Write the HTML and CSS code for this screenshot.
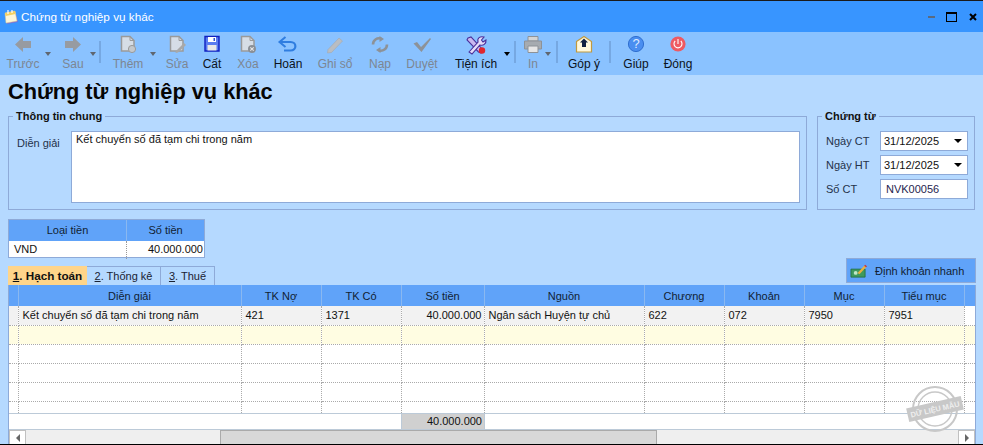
FILE: index.html
```html
<!DOCTYPE html>
<html lang="vi">
<head>
<meta charset="utf-8">
<title>Chứng từ nghiệp vụ khác</title>
<link rel="stylesheet" href="styles.css">
</head>
<body>
<div class="window">
  <header class="titlebar">
    <svg class="app-icon" viewBox="0 0 16 16"><path d="M2 5 L12 2 L15 13 L4 15 Z" fill="#7d6fd8"/><path d="M2 4 L12 2 L14 12 L3 14 Z" fill="#fdf6d8" stroke="#d8c890" stroke-width=".5"/><path d="M2 4 L12 2 L12.6 5 L2.6 7 Z" fill="#f4d060"/><path d="M5 1v4M9 1v3" stroke="#fff" stroke-width="1.2"/></svg>
    <span class="title-text">Chứng từ nghiệp vụ khác</span>
    <div class="win-controls">
      <span class="win-min"></span>
      <span class="win-max"></span>
      <svg class="win-close" viewBox="0 0 8 8"><path d="M1 1 L7 7 M7 1 L1 7" stroke="#000" stroke-width="2"/></svg>
    </div>
  </header>

  <nav class="toolbar">
    <div class="tb w40 off"><svg class="ic" viewBox="0 0 24 20"><path d="M4 9.5 L12 2 V6 H20 V13 H12 V17 Z" fill="#979ba1"/></svg><span>Trước</span></div>
    <div class="drop w10 off"></div>
    <div class="tb w30 ml5 off"><svg class="ic" viewBox="0 0 24 20"><path d="M20 9.5 L12 2 V6 H4 V13 H12 V17 Z" fill="#979ba1"/></svg><span>Sau</span></div>
    <div class="drop w10 off"></div>
    <i class="sep s98"></i>
    <div class="tb w40 off"><svg class="ic" viewBox="0 0 24 20"><path d="M5.5 1.5 H14 L18 5.5 V16 H5.5 Z" fill="#d6dde6" stroke="#9a9a9a" stroke-width="1.5"/><path d="M14 1.5 V5.5 H18" fill="none" stroke="#9a9a9a"/><circle cx="16" cy="14" r="3.6" fill="#c4c8cc" stroke="#9a9a9a"/></svg><span>Thêm</span></div>
    <div class="drop w10 off"></div>
    <div class="tb w32 ml3 off"><svg class="ic" viewBox="0 0 24 20"><path d="M5.5 1.5 H14 L18 5.5 V16 H5.5 Z" fill="#d6dde6" stroke="#9a9a9a" stroke-width="1.5"/><path d="M14 1.5 V5.5 H18" fill="none" stroke="#9a9a9a"/><path d="M11 16 L19 8 L21 10 L13 17.5 L10.5 18 Z" fill="#a8a8a8"/></svg><span>Sửa</span></div>
    <div class="tb w38 on"><svg class="ic" viewBox="0 0 24 20"><path d="M5 1.5 H19 V16 H5 Z" fill="#5a7cf0" stroke="#1020c0" stroke-width="1.4"/><path d="M8 2 H16 V7 H8 Z" fill="#fff"/><path d="M13.5 3 H15 V6 H13.5 Z" fill="#3050d0"/><path d="M7.5 10 H16.5 V15.5 H7.5 Z" fill="#e8e8e8"/></svg><span>Cất</span></div>
    <div class="tb w34 off"><svg class="ic" viewBox="0 0 24 20"><path d="M5.5 1.5 H14 L18 5.5 V16 H5.5 Z" fill="#d6dde6" stroke="#9a9a9a" stroke-width="1.5"/><path d="M14 1.5 V5.5 H18" fill="none" stroke="#9a9a9a"/><circle cx="16" cy="14" r="4" fill="#8a8f96"/><path d="M14.3 12.3 L17.7 15.7 M17.7 12.3 L14.3 15.7" stroke="#e6e6e6" stroke-width="1.1"/></svg><span>Xóa</span></div>
    <div class="tb w46 on"><svg class="ic" viewBox="0 0 24 20"><path d="M5 7 H14.5 C21 7 21 15.5 14.5 15.5 H8" fill="none" stroke="#2f7de0" stroke-width="2.2"/><path d="M9.5 2 L3.5 7 L9.5 12" fill="none" stroke="#2f7de0" stroke-width="2"/></svg><span>Hoãn</span></div>
    <div class="tb w48 off"><svg class="ic" viewBox="0 0 24 20"><path d="M5 14.5 L16 3 L19.5 6 L8.5 17.5 L4.5 18 Z" fill="#b9bdc2" stroke="#a5a8ac" stroke-width=".6"/></svg><span>Ghi sổ</span></div>
    <div class="tb w42 off"><svg class="ic" viewBox="0 0 24 20"><path d="M5 9.5 C5 5 9 2.5 13 3.5 M19 9.5 C19 14 15 16.5 11 15.5" fill="none" stroke="#8d9298" stroke-width="2.6"/><path d="M11.5 1 L16 4 L11.5 7 Z M12.5 12 L8 15 L12.5 18 Z" fill="#8d9298"/></svg><span>Nạp</span></div>
    <div class="tb w42 off"><svg class="ic" viewBox="0 0 24 20"><path d="M3.5 8.5 L7 7 L11 12 L20 3 L21 4 L11.5 17 Z" fill="#8d9298"/></svg><span>Duyệt</span></div>
    <div class="tb w52 ml7 on"><svg class="ic" viewBox="0 0 24 20"><path d="M4 3 L7 2 L19 15 L17 18 L14.5 17 L3 5 Z" fill="#c9b8f0" stroke="#4a2f9a" stroke-width="1.1"/><path d="M5 17 L14 7 C13 3 16 1 20 2 L17.5 5 L19 7 L22 5 C22.5 9 19 11 16 10 L8 19 Z" fill="#e4dcfa" stroke="#4a2f9a" stroke-width="1.1"/><circle cx="18" cy="15.5" r="3.2" fill="#e0262e"/></svg><span>Tiện ích</span></div>
    <div class="drop w10 on"></div>
    <i class="sep"></i>
    <div class="tb w24 ml3 off"><svg class="ic" viewBox="0 0 24 20"><path d="M7 1.5 H17 V6 H7 Z" fill="#d4d4d4" stroke="#8d9298"/><path d="M3.5 6 H20.5 V14 H3.5 Z" fill="#a6abb0" stroke="#8d9298"/><path d="M7 11 H17 V17.5 H7 Z" fill="#e6e6e6" stroke="#8d9298"/></svg><span>In</span></div>
    <div class="drop w6 off"></div>
    <i class="sep s556"></i>
    <div class="tb w44 on"><svg class="ic" viewBox="0 0 24 20"><path d="M4.5 6.5 L12 1.5 L19.5 6.5 V17 H4.5 Z" fill="#fff8dc" stroke="#c09a40" stroke-width="1.2"/><path d="M12 3.5 L16 7.5 H14 V12 H10 V7.5 H8 Z" fill="#102040"/></svg><span>Góp ý</span></div>
    <i class="sep s610"></i>
    <div class="tb w40 on"><svg class="ic" viewBox="0 0 24 20"><circle cx="12" cy="9" r="7.6" fill="#4a8ef0" stroke="#2f6fd0"/><text x="12" y="13" class="q">?</text></svg><span>Giúp</span></div>
    <div class="tb w42 ml1 on"><svg class="ic" viewBox="0 0 24 20"><circle cx="12" cy="9" r="7.6" fill="#ee5a62"/><path d="M9.2 6 A4 4 0 1 0 14.8 6" fill="none" stroke="#fff" stroke-width="1.1"/><path d="M12 4 V9" stroke="#fff" stroke-width="1.1"/></svg><span>Đóng</span></div>
  </nav>

  <main class="content">
    <h1 class="page-title">Chứng từ nghiệp vụ khác</h1>

    <div class="groups">
      <fieldset class="group info">
        <legend>Thông tin chung</legend>
        <label class="dg-label">Diễn giải</label>
        <div class="memo">Kết chuyển số đã tạm chi trong năm</div>
      </fieldset>
      <fieldset class="group voucher">
        <legend>Chứng từ</legend>
        <div class="field"><label>Ngày CT</label><div class="input">31/12/2025<i class="caret"></i></div></div>
        <div class="field"><label>Ngày HT</label><div class="input">31/12/2025<i class="caret"></i></div></div>
        <div class="field"><label>Số CT</label><div class="input code">NVK00056</div></div>
      </fieldset>
    </div>

    <div class="currency">
      <div class="cur-h cur-a">Loại tiền</div>
      <div class="cur-h">Số tiền</div>
      <div class="cur-c cur-a">VND</div>
      <div class="cur-c num">40.000.000</div>
    </div>

    <div class="tabrow">
      <div class="tabs">
        <div class="tab active"><u>1</u>. Hạch toán</div>
        <div class="tab t2"><u>2</u>. Thống kê</div>
        <div class="tab t3"><u>3</u>. Thuế</div>
      </div>
      <button class="quick">
        <svg class="quick-ic" viewBox="0 0 18 14"><path d="M1 5 H16 V13.5 H1 Z" fill="#3f9a5e" stroke="#1f6a3a" stroke-width=".8"/><circle cx="6" cy="9" r="2" fill="#bfe8c8"/><path d="M8 9 L15 1.5 L17 3 L10 10.5 Z" fill="#e8b040"/><path d="M15 1.5 L16 .5 L18 2 L17 3 Z" fill="#d03030"/></svg>
        Định khoản nhanh
      </button>
    </div>

    <div class="grid">
      <table class="sheet">
        <colgroup><col class="c0"><col class="c1"><col class="c2"><col class="c2"><col class="c3"><col class="c4"><col class="c2"><col class="c2"><col class="c2"><col class="c2"><col></colgroup>
        <thead>
          <tr><th></th><th>Diễn giải</th><th>TK Nợ</th><th>TK Có</th><th>Số tiền</th><th>Nguồn</th><th>Chương</th><th>Khoản</th><th>Mục</th><th>Tiểu mục</th><th></th></tr>
        </thead>
        <tbody>
          <tr class="filled"><td></td><td>Kết chuyển số đã tạm chi trong năm</td><td>421</td><td>1371</td><td class="num">40.000.000</td><td>Ngân sách Huyện tự chủ</td><td>622</td><td>072</td><td>7950</td><td>7951</td><td></td></tr>
          <tr class="newrow"><td></td><td></td><td></td><td></td><td></td><td></td><td></td><td></td><td></td><td></td><td></td></tr>
          <tr><td></td><td></td><td></td><td></td><td></td><td></td><td></td><td></td><td></td><td></td><td></td></tr>
          <tr><td></td><td></td><td></td><td></td><td></td><td></td><td></td><td></td><td></td><td></td><td></td></tr>
          <tr><td></td><td></td><td></td><td></td><td></td><td></td><td></td><td></td><td></td><td></td><td></td></tr>
          <tr class="last"><td></td><td></td><td></td><td></td><td></td><td></td><td></td><td></td><td></td><td></td><td></td></tr>
        </tbody>
      </table>
      <div class="totals"><div class="total-spacer"></div><div class="total-cell">40.000.000</div></div>
      <div class="hscroll">
        <div class="sb-btn"><i class="arr-l"></i></div>
        <div class="sb-track left"></div>
        <div class="sb-thumb"></div>
        <div class="sb-track right"></div>
        <div class="sb-btn"><i class="arr-r"></i></div>
      </div>
    </div>

    <svg class="stamp" viewBox="0 0 60 50">
      <g fill="none" stroke="#c8c8c8">
        <circle cx="30" cy="25" r="22" stroke-width="2"/>
        <circle cx="30" cy="25" r="17" stroke-width="1.4"/>
      </g>
      <g transform="rotate(-13 30 25)">
        <rect x="2" y="18" width="56" height="14" fill="#c8c8c8"/>
        <text x="30" y="28" class="stamp-text">DỮ LIỆU MẪU</text>
      </g>
    </svg>
  </main>
</div>
</body>
</html>
```

FILE: styles.css
```css
* { box-sizing: border-box; }
html, body { margin: 0; height: 100%; overflow: hidden; }
body { font-family: "Liberation Sans", Arial, sans-serif; font-size: 11px; color: #111; }

.window {
  width: 983px; height: 445px;
  display: flex; flex-direction: column;
  border-top: 1px solid #1a1a1a;
  border-bottom: 1px solid #000;
  background: #b5d9ff;
  position: relative;
}

.titlebar {
  height: 31px; flex: none;
  background: #3895ff;
  display: flex; align-items: center;
  padding: 0 0 0 3px;
}
.app-icon { width: 16px; height: 16px; margin-right: 2px; }
.title-text { color: #fff; font-size: 11.75px; }
.win-controls { margin-left: auto; display: flex; align-items: center; padding-right: 6px; }
.win-min { width: 7px; height: 2px; background: #5a6a80; margin-right: 11px; }
.win-max { width: 11px; height: 10px; border: 1px solid #000; border-top-width: 2px; margin-right: 12px; }
.win-close { width: 8px; height: 8px; }

.toolbar {
  height: 43px; flex: none;
  background: #8ac2ff;
  display: flex;
  padding-left: 3px;
  font-size: 12px;
}
.tb { display: flex; flex-direction: column; align-items: center; white-space: nowrap; padding-top: 3px; flex: none; }
.ic { width: 24px; height: 20px; display: block; margin-bottom: 1px; }
.tb span { line-height: 16px; }
.off { color: #7d8692; }
.on { color: #0c1220; }
.q { font: 13px "Liberation Sans", sans-serif; fill: #dfeaff; text-anchor: middle; }

.w6 { width: 6px; } .w10 { width: 10px; } .w24 { width: 24px; } .w30 { width: 30px; } .w32 { width: 32px; }
.w34 { width: 34px; } .w38 { width: 38px; } .w40 { width: 40px; } .w42 { width: 42px; }
.w44 { width: 44px; } .w46 { width: 46px; } .w48 { width: 48px; } .w52 { width: 52px; }
.ml1 { margin-left: 1px; } .ml3 { margin-left: 3px; } .ml5 { margin-left: 5px; } .ml7 { margin-left: 7px; }

.drop { flex: none; position: relative; }
.drop::after {
  content: ""; position: absolute; left: 50%; top: 20px; margin-left: -3px;
  border: 3px solid transparent; border-top: 4px solid currentColor; border-bottom: 0;
}
.drop.off { color: #5f6670; }
.drop.on { color: #000; }

.sep { flex: none; width: 2px; height: 22px; margin: 9px 2px 0; background: #6f9fd8; opacity: .75; }
.s98 { margin: 9px 7px 0 1px; }
.s556 { margin: 9px 4px 0 5px; }
.s610 { margin: 9px 5px 0 3px; }

.content { flex: 1; padding: 0 7px 0 8px; display: flex; flex-direction: column; min-height: 0; }
.page-title { margin: 3px 0 0; font-size: 21.75px; line-height: 28px; font-weight: 700; color: #050505; height: 31px; }

.groups { display: flex; gap: 10px; height: 101px; flex: none; }
.group { margin: 0; border: 1px solid #8eaad8; padding: 0; min-width: 0; position: relative; height: 101px; }
.group legend { font-weight: 700; margin-left: 4px; padding: 0 3px; font-size: 11px; line-height: 14px; color: #111; }
.info { width: 799px; padding: 0; }
.voucher { width: 158px; padding: 8px 6px 0 8px; }
.voucher legend { margin-left: -4px; }
.dg-label { position: absolute; left: 8px; top: 14px; color: #24324a; }
.memo { position: absolute; left: 62px; top: 8px; width: 729px; height: 72px; background: #fff; border: 1px solid #8eaad8; padding: 1px 4px; }
.field { display: flex; align-items: center; height: 20px; margin-bottom: 4px; }
.field label { width: 54px; color: #24324a; }
.input { width: 88px; height: 20px; border: 1px solid #8eaad8; background: #fff; padding-left: 3px; line-height: 18px; position: relative; }
.code { padding-left: 5px; color: #26244e; }
.caret { position: absolute; right: 5px; top: 7px; border: 4px solid transparent; border-top: 4px solid #000; border-bottom: 0; }

.currency {
  margin-top: 9px; flex: none; width: 197px; height: 39px;
  display: grid; grid-template-columns: 118px 77px; grid-template-rows: 21px 18px;
  border: 1px solid #8eaad8; background: #fff;
}
.cur-h { background: #60a3f9; text-align: center; line-height: 20px; color: #111e33; }
.cur-h.cur-a { border-right: 1px solid #8ab8f0; }
.cur-c { padding: 0 1px 0 5px; line-height: 17px; }
.cur-c.cur-a { border-right: 1px dotted #999; }
.num { text-align: right; }

.tabrow { display: flex; justify-content: space-between; height: 27px; flex: none; width: 968px; }
.tabs { display: flex; align-self: flex-end; height: 19px; }
.tab { border: 1px solid #8eaad8; border-bottom: 0; border-left: 0; line-height: 18px; text-align: center; color: #1a2233; }
.tab.active { width: 79px; background: #ffd58a; font-weight: 700; font-size: 11.7px; border: 0; color: #111; line-height: 19px; }
.t2 { width: 74px; } .t3 { width: 54px; }
.quick {
  width: 130px; height: 25px; background: #60a3f9; border: 1px solid #8eaad8;
  font: 11px "Liberation Sans", Arial, sans-serif; color: #111e33;
  display: flex; align-items: center; padding: 0 0 0 3px; white-space: nowrap;
}
.quick-ic { width: 17px; height: 14px; margin-right: 8px; }

.grid { width: 968px; border-left: 1px solid #8eaad8; border-right: 1px solid #8eaad8; background: #fff; flex: 1; display: flex; flex-direction: column; min-height: 0; }
.sheet { border-collapse: collapse; table-layout: fixed; width: 966px; flex: none; }
.c0 { width: 9px; } .c1 { width: 223px; } .c2 { width: 80px; } .c3 { width: 83px; } .c4 { width: 160px; }
.sheet th { background: #60a3f9; height: 21px; font-weight: 400; color: #111e33; border-right: 1px solid #8ab8f0; padding: 0; }
.sheet td { height: 19px; padding: 0 3px 0 4px; border-right: 1px dotted #aaa; border-bottom: 1px dotted #aaa; white-space: nowrap; overflow: hidden; color: #111; }
.sheet td.num { padding-right: 2px; }
.sheet th:last-child, .sheet td:last-child { border-right: 0; }
.filled td { background: #f2f2f2; }
.filled td:last-child { background: #fff; }
.newrow td { background: #fffde2; }
.sheet .last td { height: 12px; border-bottom: 0; }

.totals { display: flex; height: 17px; border-top: 1px solid #bccad8; border-bottom: 1px solid #bccad8; flex: none; }
.total-spacer { width: 392px; }
.total-cell { width: 84px; background: #d0d0d0; border-left: 1px solid #bccad8; border-right: 1px solid #bccad8; text-align: right; padding-right: 2px; line-height: 15px; }

.hscroll { display: flex; flex: 1; min-height: 0; background: #efefef; }
.sb-btn { width: 17px; background: #fff; border: 1px solid #c0c0c0; border-bottom: 0; display: flex; align-items: center; justify-content: center; flex: none; }
.arr-l { border: 4px solid transparent; border-right: 4px solid #666; border-left: 0; }
.arr-r { border: 4px solid transparent; border-left: 4px solid #666; border-right: 0; }
.sb-track.left { width: 194px; flex: none; }
.sb-thumb { width: 437px; flex: none; background: #d8d8d8; border-top: 1px solid #aaa; border-left: 1px solid #aaa; border-right: 1px solid #aaa; }
.sb-track.right { flex: 1; }

.stamp { position: absolute; left: 905px; top: 383px; width: 60px; height: 50px; }
.stamp-text { font: 700 7.5px "Liberation Sans", sans-serif; fill: #eeeeee; text-anchor: middle; }
```
